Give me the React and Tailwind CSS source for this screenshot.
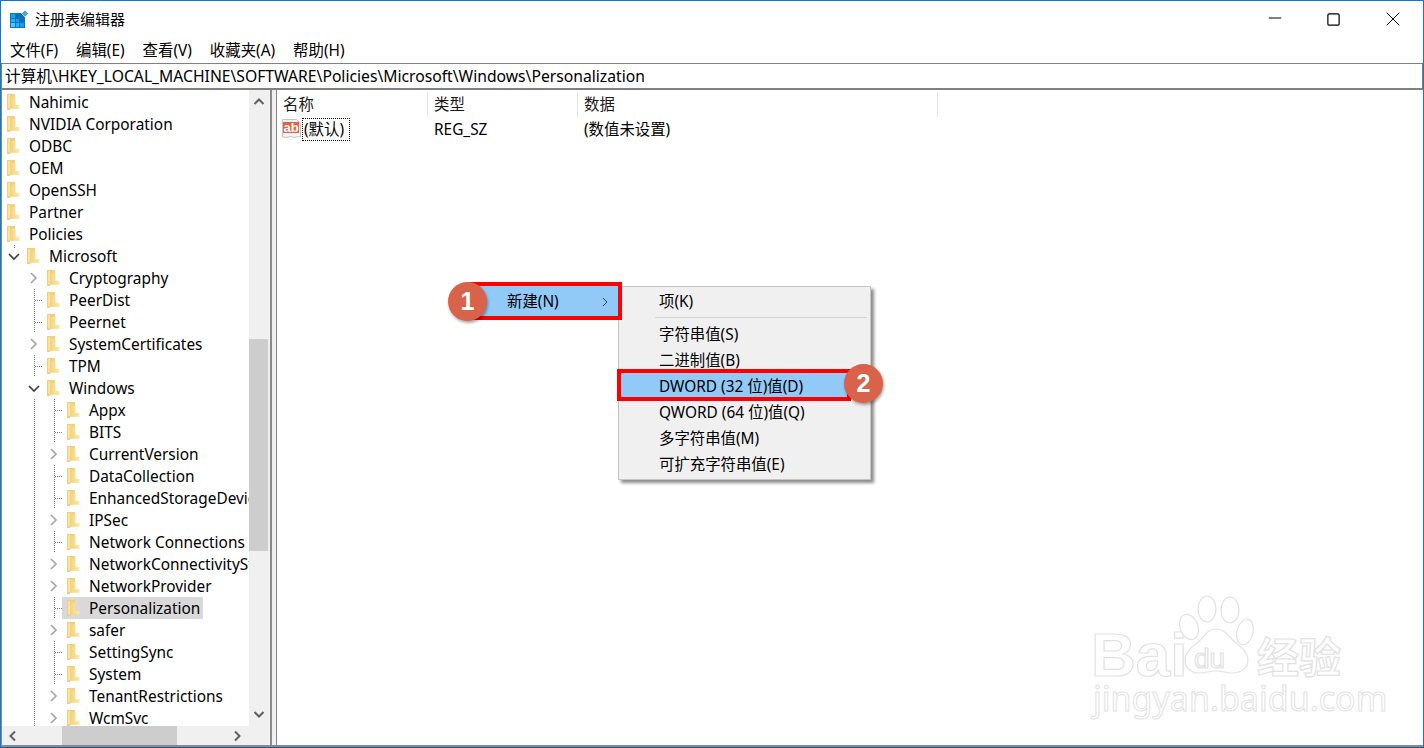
import React from 'react';
import { Minus, Square, X } from 'lucide-react';

const menus = ['文件(F)', '编辑(E)', '查看(V)', '收藏夹(A)', '帮助(H)'];

const treeRows = [
  { label: 'Nahimic', level: 0 },
  { label: 'NVIDIA Corporation', level: 0 },
  { label: 'ODBC', level: 0 },
  { label: 'OEM', level: 0 },
  { label: 'OpenSSH', level: 0 },
  { label: 'Partner', level: 0 },
  { label: 'Policies', level: 0 },
  { label: 'Microsoft', level: 1, toggle: 'open' },
  { label: 'Cryptography', level: 2, toggle: 'closed' },
  { label: 'PeerDist', level: 2 },
  { label: 'Peernet', level: 2 },
  { label: 'SystemCertificates', level: 2, toggle: 'closed' },
  { label: 'TPM', level: 2 },
  { label: 'Windows', level: 2, toggle: 'open' },
  { label: 'Appx', level: 3 },
  { label: 'BITS', level: 3 },
  { label: 'CurrentVersion', level: 3, toggle: 'closed' },
  { label: 'DataCollection', level: 3 },
  { label: 'EnhancedStorageDevices', level: 3 },
  { label: 'IPSec', level: 3, toggle: 'closed' },
  { label: 'Network Connections', level: 3 },
  { label: 'NetworkConnectivityStatus', level: 3, toggle: 'closed' },
  { label: 'NetworkProvider', level: 3, toggle: 'closed' },
  { label: 'Personalization', level: 3, selected: true },
  { label: 'safer', level: 3, toggle: 'closed' },
  { label: 'SettingSync', level: 3 },
  { label: 'System', level: 3 },
  { label: 'TenantRestrictions', level: 3, toggle: 'closed' },
  { label: 'WcmSvc', level: 3, toggle: 'closed' },
];

const RegIcon = () => (
  <svg width="19" height="19" viewBox="0 0 19 19" className="shrink-0">
    <rect x="0" y="3" width="15" height="15" fill="#0a78c8" />
    <rect x="1" y="4" width="4" height="4" fill="#1a9ee6" />
    <rect x="6" y="4" width="3" height="4" fill="#0f6fb5" />
    <rect x="10" y="4" width="4" height="4" fill="#0f6fb5" />
    <rect x="1" y="9" width="4" height="3" fill="#28b0ee" />
    <rect x="6" y="9" width="3" height="3" fill="#1a9ee6" />
    <rect x="10" y="9" width="4" height="3" fill="#0f6fb5" />
    <rect x="1" y="13" width="4" height="4" fill="#4cc6f5" />
    <rect x="6" y="13" width="3" height="4" fill="#28b0ee" />
    <rect x="10" y="13" width="4" height="4" fill="#1a9ee6" />
    <path d="M15 0l3.500 3.500L15 7l-3.500-3.500z" fill="#4aa8dc" stroke="#ffffff" strokeWidth="0.6" />
  </svg>
);

const FolderIcon = () => (
  <svg width="13" height="16" viewBox="0 0 13 16" className="shrink-0">
    <defs>
      <linearGradient id="folderBody" x1="0" y1="0" x2="1" y2="0">
        <stop offset="0" stopColor="#f3d27c" />
        <stop offset="1" stopColor="#ffe9a6" />
      </linearGradient>
    </defs>
    <path d="M0 0h8v11h4v3.500H3.500L3 16H0z" fill="#f0cf7e" />
    <path d="M3 2.500h5.500v8.500H12.500v3.500H3z" fill="url(#folderBody)" />
    <path d="M1 1h2v13H1z" fill="#fbe39f" />
  </svg>
);

// expander chevron and dotted guide lines to the left of a tree node
const TreeGutter = ({ level, toggle }) => {
  const width = 20 * level;
  const cx = 14 + 20 * (level - 1);
  return (
    <svg width={width} height="22" viewBox={`2 0 ${width} 22`} className="shrink-0">
      {level >= 2 && !(level === 2 && toggle) && (
        <path d="M34.500 0V22" stroke="#808080" strokeDasharray="1 1" fill="none" />
      )}
      {level === 3 && !toggle && (
        <path d="M54.500 0V22" stroke="#808080" strokeDasharray="1 1" fill="none" />
      )}
      {level >= 2 && !toggle && (
        <path d={`M${cx + 1} 11.500H${cx + 10}`} stroke="#808080" strokeDasharray="1 1" fill="none" />
      )}
      {level === 1 && <path d="M14.500 0V3" stroke="#808080" strokeDasharray="1 1" fill="none" />}
      {toggle === 'open' && (
        <path d={`M${cx - 5} 9l5 5 5-5`} stroke="#404040" strokeWidth="1.700" fill="none" />
      )}
      {toggle === 'closed' && (
        <path d={`M${cx - 3} 6l5 5-5 5`} stroke="#a6a6a6" strokeWidth="1.700" fill="none" />
      )}
    </svg>
  );
};

const TreeRow = ({ row }) => (
  <div className="flex h-[22px] items-center whitespace-nowrap">
    <TreeGutter level={row.level} toggle={row.toggle} />
    <div className={`flex h-[22px] items-center pl-[5px] pr-[3px] ${row.selected ? 'bg-[#d9d9d9]' : ''}`}>
      <FolderIcon />
      <span className="ml-[9px] pt-[2px]">{row.label}</span>
    </div>
  </div>
);

const ScrollChevron = ({ d }) => (
  <svg width="12" height="12" viewBox="0 0 12 12">
    <path d={d} stroke="#606060" strokeWidth="2" fill="none" />
  </svg>
);

const DefaultValueIcon = () => (
  <svg width="19" height="20" viewBox="0 0 19 20" className="shrink-0">
    <path d="M0.500 0.500h14l4 4v13.500c-3 -1.500 -5 1.500 -8 0s-5 1.500 -10 0z" fill="#f4f4f4" stroke="#c4c4c4" />
    <rect x="1" y="3" width="16" height="11" fill="#e8603f" />
    <text x="1.500" y="13" fontSize="13" fontWeight="700" fill="#ffffff" className="[font-family:'Liberation_Sans',sans-serif]">ab</text>
  </svg>
);

const Badge = ({ n, className }) => (
  <div className={`absolute flex h-[39px] w-[39px] items-center justify-center rounded-full bg-[#d8634a] text-[25px] font-bold text-white shadow-[1px_2px_3px_rgba(0,0,0,0.35)] [font-family:'Liberation_Sans',sans-serif] ${className}`}>
    {n}
  </div>
);

const ContextMenu = () => (
  <>
    <div className="absolute left-[617px] top-[285px] flex w-[253px] flex-col border border-[#c4c4c4] bg-[#f0f0f0] pb-[1px] pl-[40px] shadow-[3px_3px_3px_rgba(0,0,0,0.45)]">
      <div className="flex h-[28px] items-center pt-[1px]">项(K)</div>
      <div className="my-[2px] ml-[-4px] mr-[3px] h-px bg-[#d4d4d4]" />
      <div className="mt-[2px] flex h-[26px] items-center">字符串值(S)</div>
      <div className="flex h-[26px] items-center">二进制值(B)</div>
      <div className="relative flex h-[26px] items-center">
        <div className="absolute left-[-42px] top-[-5px] h-[32px] w-[234px] border-4 border-[#ff0000] bg-[#91c9f7]" />
        <span className="relative">DWORD (32 位)值(D)</span>
      </div>
      <div className="flex h-[26px] items-center">QWORD (64 位)值(Q)</div>
      <div className="flex h-[26px] items-center">多字符串值(M)</div>
      <div className="flex h-[26px] items-center">可扩充字符串值(E)</div>
    </div>

    <div className="absolute left-[468px] top-[281px] flex h-[38px] w-[153px] items-center border-4 border-[#ff0000] bg-[#91c9f7] pl-[34px] pt-[2px]">
      新建(N)
      <svg width="7" height="10" viewBox="0 0 7 10" className="ml-[43px]">
        <path d="M1 1l4 4-4 4" stroke="#404040" fill="none" />
      </svg>
    </div>
    <Badge n="1" className="left-[447px] top-[281px]" />
    <Badge n="2" className="left-[843px] top-[363px]" />
  </>
);

const Watermark = () => (
  <svg width="344" height="158" viewBox="1080 590 344 158" className="pointer-events-none absolute left-[1079px] top-[589px]">
    <g fill="#ffffff" stroke="#e2e2e2" strokeWidth="1.200">
      <text x="1091" y="676" fontSize="62" fontWeight="700" className="[font-family:'Liberation_Sans',sans-serif]">Bai</text>
      <ellipse cx="1189" cy="627" rx="9" ry="13" transform="rotate(-20 1189 627)" />
      <ellipse cx="1207" cy="609" rx="9" ry="13" />
      <ellipse cx="1230" cy="610" rx="9" ry="13" />
      <ellipse cx="1245" cy="632" rx="8" ry="13" transform="rotate(15 1245 632)" />
      <path d="M1216 629c10 0 13 9 20 14s12 10 12 17c0 9-8 13-16 13-6 0-10-2-16-2s-11 2-17 2c-8 0-14-5-14-13 0-7 5-12 12-17s9-14 19-14z" />
      <text x="1194" y="668" fontSize="28" className="[font-family:'Liberation_Sans',sans-serif]">du</text>
      <text x="1257" y="673" fontSize="42" fontWeight="700" className="[font-family:'Noto_Sans_CJK_SC',sans-serif]">经验</text>
      <text x="1093" y="711" fontSize="34" strokeWidth="1" className="[font-family:'Noto_Sans',sans-serif]">jingyan.baidu.com</text>
    </g>
  </svg>
);

const App = () => {
  return (
    <div className="relative flex h-[748px] w-[1424px] flex-col overflow-hidden border border-[#0f7bd0] border-b-[#1c5a94] bg-white text-[15.4px] leading-none text-black [font-family:'Noto_Sans','Noto_Sans_CJK_SC',sans-serif]">
      {/* title bar */}
      <div className="flex h-[36px] shrink-0 items-center pl-[9px]">
        <RegIcon />
        <span className="ml-[6px] text-[15px]">注册表编辑器</span>
        <div className="ml-auto flex items-center pr-[1px]">
          <div className="flex w-[59px] justify-center pb-[2px]"><Minus size={20} strokeWidth={1} absoluteStrokeWidth /></div>
          <div className="flex w-[59px] justify-center"><Square size={15} strokeWidth={1.2} absoluteStrokeWidth /></div>
          <div className="flex w-[59px] justify-center"><X size={24} strokeWidth={1} absoluteStrokeWidth /></div>
        </div>
      </div>

      {/* menu bar */}
      <div className="flex h-[26px] shrink-0 items-center gap-[18px] pl-[9px] pt-[2px]">
        {menus.map((m) => (
          <span key={m}>{m}</span>
        ))}
      </div>

      {/* address bar */}
      <div className="flex h-[27px] shrink-0 items-center border border-b-2 border-[#808080] pl-[3px] pt-[2px] text-[15.7px]">
        计算机\HKEY_LOCAL_MACHINE\SOFTWARE\Policies\Microsoft\Windows\Personalization
      </div>

      {/* panes */}
      <div className="flex min-h-0 flex-1 border-b-2 border-[#8a8a8a]">
        {/* key tree */}
        <div className="flex w-[271px] shrink-0 flex-col border-l border-r-2 border-[#8a8a8a] bg-[#f0f0f0]">
          <div className="flex min-h-0 flex-1">
            <div className="min-w-0 flex-1 overflow-hidden bg-white pt-[1px]">
              {treeRows.map((row) => (
                <TreeRow key={row.label} row={row} />
              ))}
            </div>
            <div className="flex w-[21px] shrink-0 flex-col pr-[2px]">
              <div className="flex h-[22px] shrink-0 items-center justify-center pt-[2px]">
                <ScrollChevron d="M1.500 8l4.500-4.500 4.500 4.500" />
              </div>
              <div className="mt-[227px] h-[212px] w-full shrink-0 bg-[#cdcdcd]" />
              <div className="mt-auto flex h-[24px] shrink-0 items-center justify-center">
                <ScrollChevron d="M1.500 4l4.500 4.500 4.500-4.500" />
              </div>
            </div>
          </div>
          <div className="flex h-[19px] shrink-0 items-center">
            <div className="flex w-[20px] justify-center pl-[2px]"><ScrollChevron d="M8 1.500L3.500 6 8 10.500" /></div>
            <div className="ml-[40px] h-full w-[115px] bg-[#cdcdcd]" />
            <div className="ml-[50px] flex w-[20px] justify-center"><ScrollChevron d="M4 1.500L8.500 6 4 10.500" /></div>
          </div>
        </div>

        {/* splitter */}
        <div className="w-[4px] shrink-0 bg-[#f0f0f0]" />

        {/* value list */}
        <div className="min-w-0 flex-1 border-l border-[#8a8a8a]">
          <div className="mt-[2px] flex h-[25px] text-[#1a1a1a]">
            <div className="flex w-[151px] items-center border-r border-[#e5e5e5] pl-[6px]">名称</div>
            <div className="flex w-[150px] items-center border-r border-[#e5e5e5] pl-[6px]">类型</div>
            <div className="flex w-[360px] items-center border-r border-[#e5e5e5] pl-[6px]">数据</div>
          </div>
          <div className="flex h-[24px] items-center">
            <div className="flex w-[151px] items-center pl-[5px]">
              <DefaultValueIcon />
              <span className="ml-[1px] flex h-[23px] w-[48px] items-center border border-dotted border-black pl-[1px] pt-[2px]">(默认)</span>
            </div>
            <div className="w-[150px] pl-[6px] pt-[2px]">REG_SZ</div>
            <div className="pl-[6px] pt-[2px]">(数值未设置)</div>
          </div>
        </div>
      </div>

      <ContextMenu />
      <Watermark />
    </div>
  );
};

export default App;
